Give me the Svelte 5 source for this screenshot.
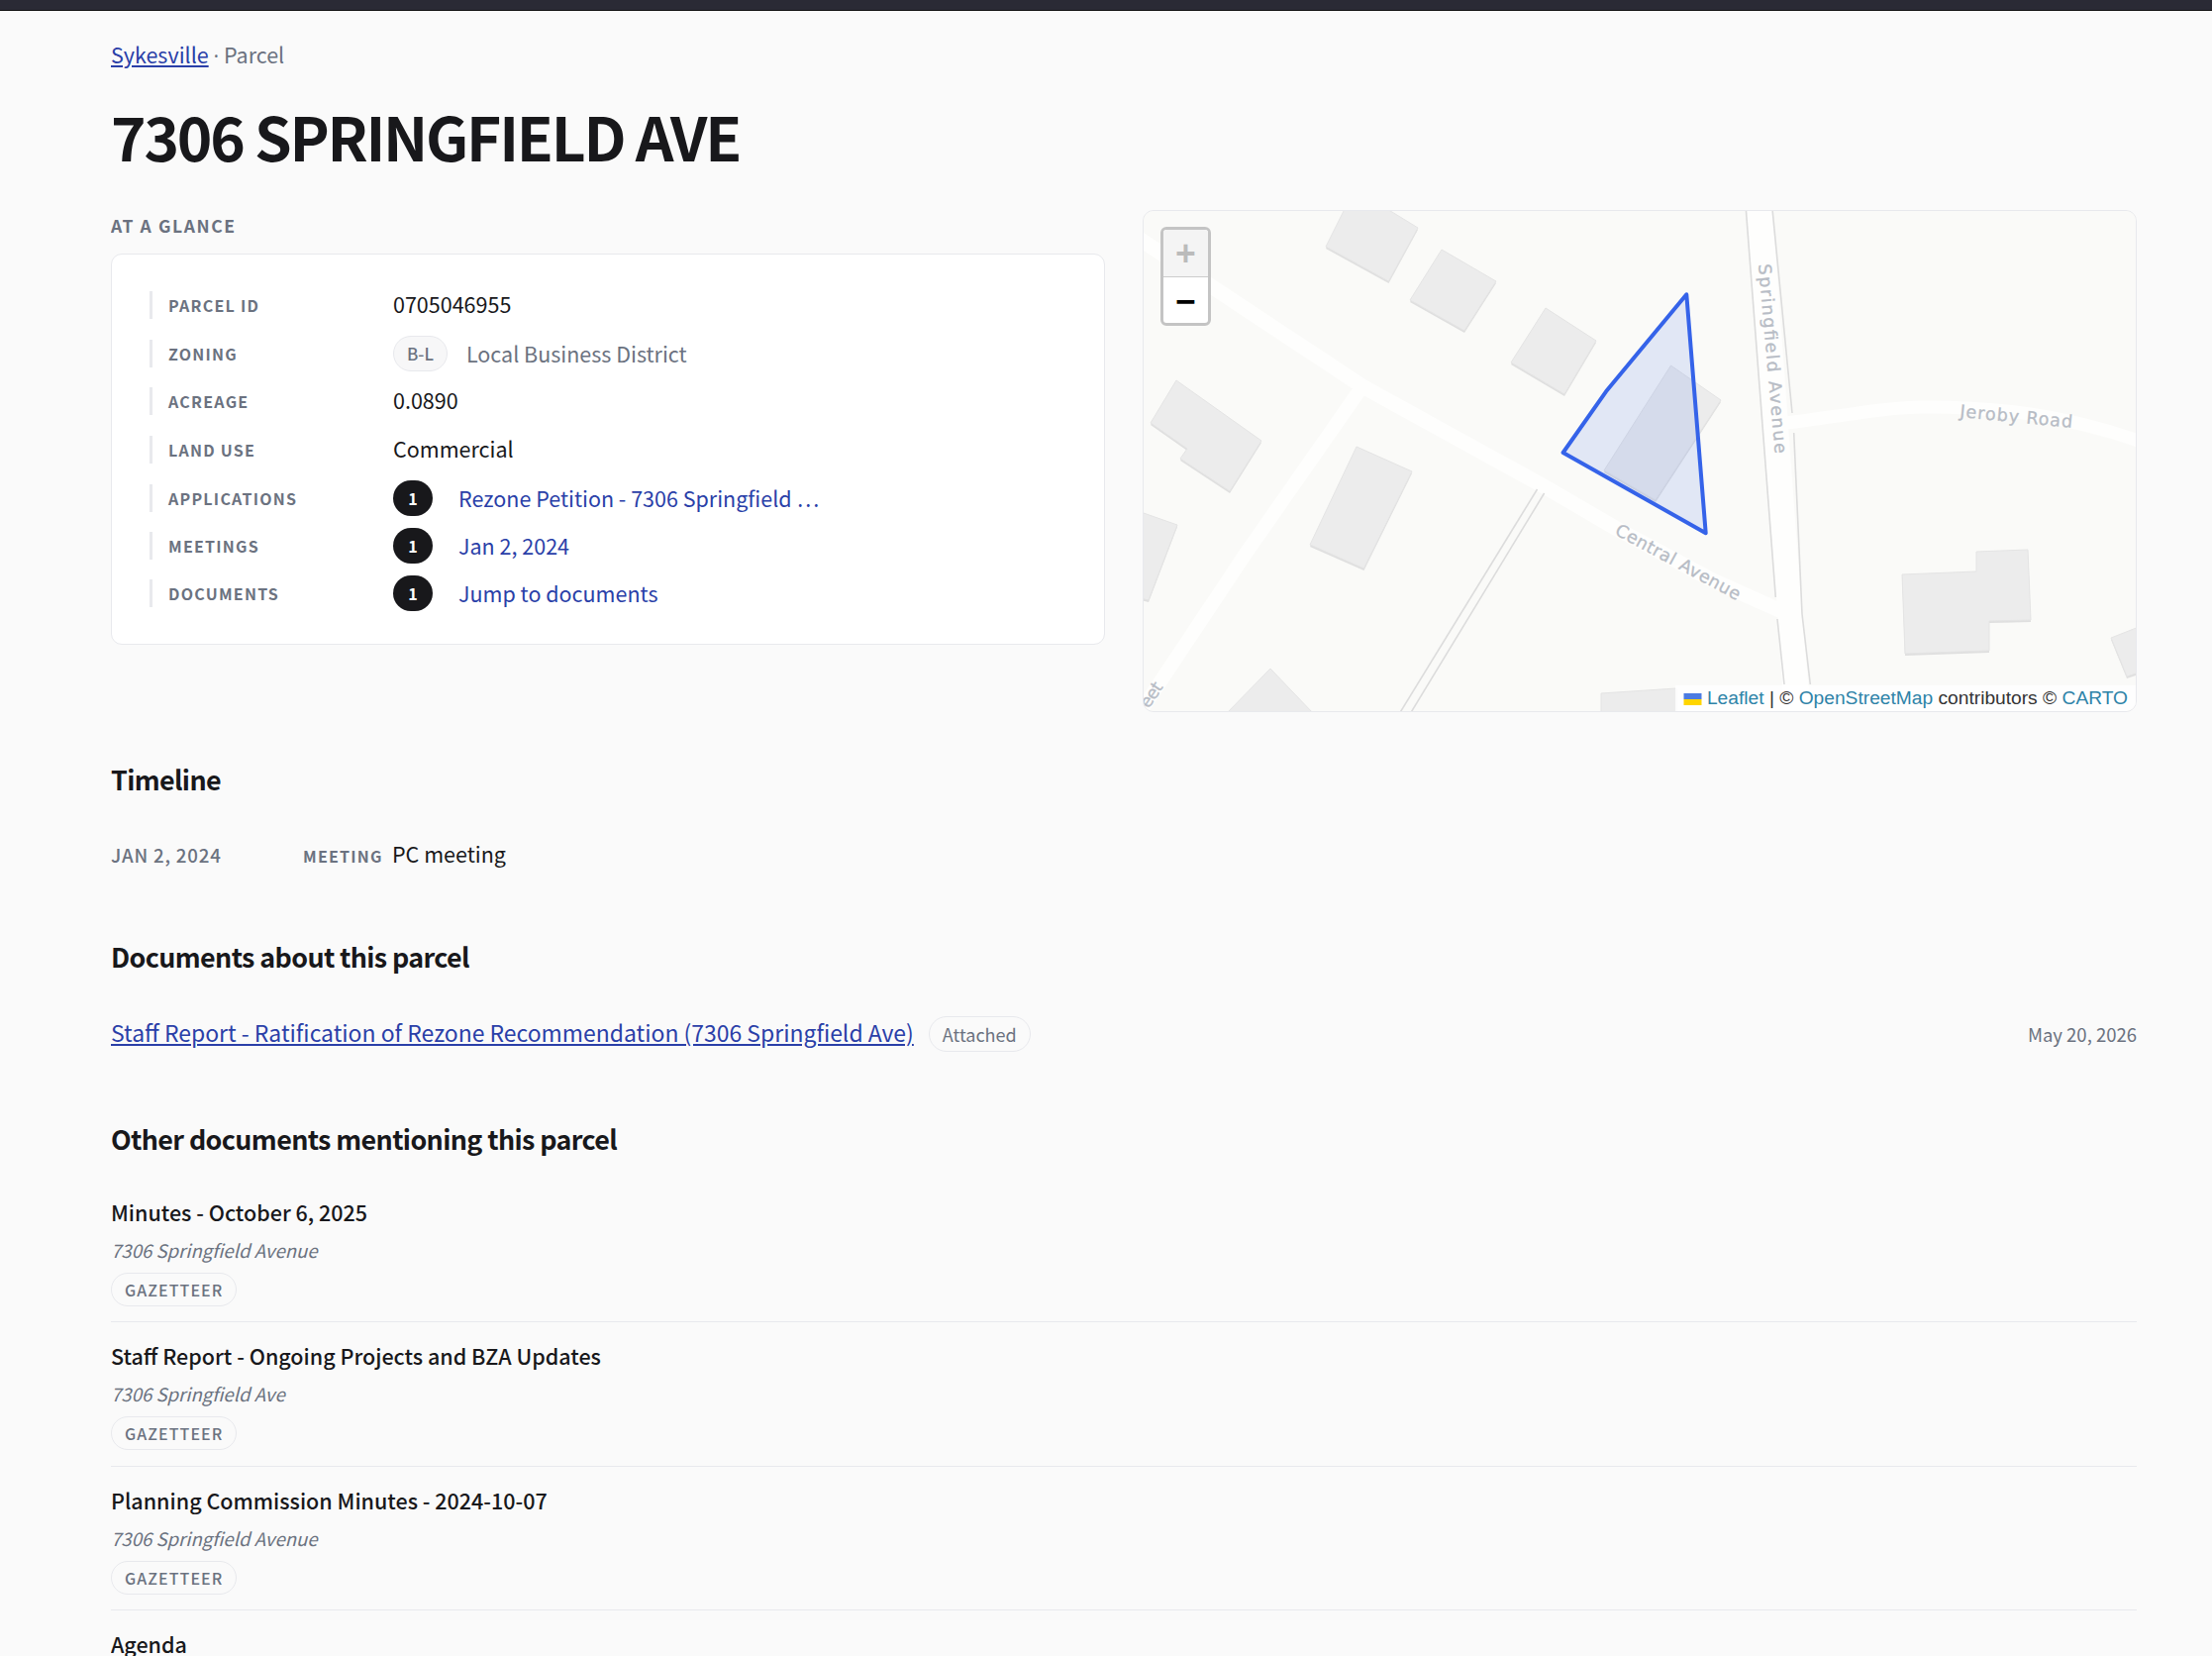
<script>
  const rows = [
    { label: 'Parcel ID', value: '0705046955' },
    { label: 'Zoning', code: 'B-L', muted: 'Local Business District' },
    { label: 'Acreage', value: '0.0890' },
    { label: 'Land use', value: 'Commercial' },
    { label: 'Applications', count: 1, link: 'Rezone Petition - 7306 Springfield …' },
    { label: 'Meetings', count: 1, link: 'Jan 2, 2024' },
    { label: 'Documents', count: 1, link: 'Jump to documents' }
  ];

  const mentions = [
    { title: 'Minutes - October 6, 2025', sub: '7306 Springfield Avenue' },
    { title: 'Staff Report - Ongoing Projects and BZA Updates', sub: '7306 Springfield Ave' },
    { title: 'Planning Commission Minutes - 2024-10-07', sub: '7306 Springfield Avenue' },
    { title: 'Agenda' }
  ];

  // building footprints, in map pixels
  const buildings = [
    '204,-2 247,-2 278,17 248.5,71 185,36',
    '302,39 357,71 325,121 270,90',
    '407,98 458,131 426,185 372,153',
    '34,171 120,232 88,283 38,250 45,240 8,214',
    '216,238 272,263 223.5,361 169,337',
    '-2,304 35,317 6,393 -2,391',
    '129,462 173,508 84,508',
    '463,487 539,482 539,508 463,508',
    '533.5,156 584,191 518,292 466,262',
    '767,367 842,364 842,344 894,342 897,413 855,414 855,444 770,447',
    '978,431 1006,420 1006,466 994,470'
  ];
</script>

<div class="topbar"></div>

<main>
  <p class="crumb"><a href="#top">Sykesville</a> <span class="dot">·</span> Parcel</p>
  <h1>7306 SPRINGFIELD AVE</h1>

  <div class="top">
    <section>
      <h2 class="eyebrow">At a glance</h2>
      <dl class="card">
        {#each rows as r}
          <div class="row">
            <dt>{r.label}</dt>
            <dd>
              {#if r.code}
                <span class="code">{r.code}</span><span class="muted">{r.muted}</span>
              {:else if r.link}
                <span class="count">{r.count}</span><a class="plain" href="#top">{r.link}</a>
              {:else}
                <span class="value">{r.value}</span>
              {/if}
            </dd>
          </div>
        {/each}
      </dl>
    </section>

    <div class="map">
      <svg viewBox="0 0 1004 506" width="1004" height="506">
        <rect width="1004" height="506" fill="#fafaf8" />

        <g fill="none" stroke="#fefefd" stroke-width="15">
          <path d="M-5 27 L222 177 L407 279 L479 321 L576 373 L645 404" />
          <path d="M222 177 L104 346 L-4 508" stroke-width="14" />
          <path d="M650 214 C700 208 750 198 790 198 C860 198 930 205 1008 233" stroke-width="13" />
        </g>
        <path d="M609 -2 L641 402 L648 508 L675 508 L666 407 L636 -2 Z" fill="#fefefd" />
        <g fill="none" stroke="#dcdcdc" stroke-width="1.6">
          <path d="M609.3 -2 L639.3 390" />
          <path d="M641 412 L648 478" />
          <path d="M636 -2 L656 204" />
          <path d="M657.7 224 L666 407 L674.3 478" />
          <path d="M398.5 281 L259 508" />
          <path d="M405.6 285 L270 508" />
        </g>

        {#each buildings as pts}
          <polygon points={pts} fill="#dfdfdf" transform="translate(0 2)" />
          <polygon points={pts} fill="#ececec" stroke="#e4e4e4" stroke-width="1" />
        {/each}

        <polygon points="549.3,84.3 468,182.3 424.6,244 568.7,325.2" fill="#3563e9" fill-opacity="0.12" stroke="#3563e9" stroke-width="4" stroke-linejoin="round" />

        <g class="maplabel">
          <text transform="translate(476 326) rotate(28.5)" textLength="141" lengthAdjust="spacing">Central Avenue</text>
          <text transform="translate(622 54) rotate(85)" textLength="192" lengthAdjust="spacing">Springfield Avenue</text>
          <text transform="translate(825 208) rotate(5.5)" textLength="114" lengthAdjust="spacing">Jeroby Road</text>
          <text transform="translate(6 503) rotate(-56)" textLength="27" lengthAdjust="spacing">eet</text>
        </g>
      </svg>

      <div class="zoom">
        <span class="disabled">+</span>
        <span>−</span>
      </div>

      <div class="attrib">
        <svg class="flag" viewBox="0 0 12 8" width="19" height="12"><rect width="12" height="4" fill="#4C7BE1" /><rect y="4" width="12" height="4" fill="#FFD500" /></svg>
        <a href="#top">Leaflet</a> <span class="pipe">|</span> © <a href="#top">OpenStreetMap</a> contributors © <a href="#top">CARTO</a>
      </div>
    </div>
  </div>

  <h2 class="heading timeline-h">Timeline</h2>
  <div class="timeline">
    <span class="date">JAN 2, 2024</span>
    <span class="kind">Meeting</span>
    <span>PC meeting</span>
  </div>

  <h2 class="heading docs-h">Documents about this parcel</h2>
  <div class="doc">
    <a href="#top">Staff Report - Ratification of Rezone Recommendation (7306 Springfield Ave)</a>
    <span class="attached">Attached</span>
    <span class="docdate">May 20, 2026</span>
  </div>

  <h2 class="heading other-h">Other documents mentioning this parcel</h2>
  <ul>
    {#each mentions as m}
      <li>
        <div class="title">{m.title}</div>
        {#if m.sub}
          <div class="sub">{m.sub}</div>
          <span class="tag">Gazetteer</span>
        {/if}
      </li>
    {/each}
  </ul>
</main>

<style>
  :global(body) {
    background: #fafafa;
    color: #18181b;
    font-family: "Noto Sans CJK SC", "Open Sans", sans-serif;
    font-size: 21.5px;
  }

  .topbar {
    height: 10px;
    background: #2a2a35;
    border-bottom: 1px solid #111;
  }

  main {
    width: 2046px;
    margin-left: 112px;
    height: 1661px;
    overflow: hidden;
  }

  a {
    color: #2a3fa8;
  }

  .plain {
    text-decoration: none;
  }

  .crumb {
    margin: 28px 0 0;
    line-height: 32px;
    color: #6b7280;
  }

  .dot {
    font-family: "Open Sans", sans-serif;
  }

  h1 {
    margin: 27px 0 0;
    font-size: 60.4px;
    line-height: 76px;
    font-weight: 700;
    letter-spacing: -2.25px;
  }

  .top {
    display: grid;
    grid-template-columns: 1004px 1004px;
    gap: 38px;
    margin-top: 36.6px;
    align-items: start;
  }

  .eyebrow {
    margin: 4px 0 0;
    font-size: 17.5px;
    line-height: 24px;
    font-weight: 700;
    color: #6b7280;
    text-transform: uppercase;
    letter-spacing: 1.6px;
  }

  .card {
    margin: 16px 0 0;
    box-sizing: border-box;
    height: 395.4px;
    padding: 33px 38px 0;
    background: #fff;
    border: 1.4px solid #e8e9ed;
    border-radius: 11px;
    display: flex;
    flex-direction: column;
    gap: 12px;
  }

  .row {
    display: flex;
    align-items: center;
    min-height: 35.5px;
  }

  dt {
    box-sizing: border-box;
    width: 246px;
    height: 28px;
    line-height: 28px;
    padding-left: 16px;
    border-left: 3px solid #e8e9ed;
    font-size: 16px;
    font-weight: 700;
    color: #6b7280;
    text-transform: uppercase;
    letter-spacing: 1.25px;
  }

  dd {
    margin: 0;
    display: flex;
    align-items: center;
    line-height: 34px;
  }

  .value {
    margin-bottom: 3px;
  }

  .code {
    box-sizing: border-box;
    height: 36px;
    line-height: 34px;
    padding: 0 13px;
    margin-right: 19px;
    border: 1.4px solid #e8e9ed;
    border-radius: 18px;
    background: #f7f7f8;
    font-size: 17px;
    font-weight: 500;
    color: #6b7280;
  }

  .muted {
    color: #6b7280;
  }

  .count {
    width: 40px;
    height: 36px;
    line-height: 36px;
    margin-right: 26px;
    border-radius: 20px;
    background: #18181b;
    color: #fff;
    font-size: 16px;
    font-weight: 700;
    text-align: center;
  }

  .map {
    position: relative;
    box-sizing: border-box;
    width: 1004px;
    height: 507px;
    border: 1.4px solid #e8e9ed;
    border-radius: 11px;
    overflow: hidden;
    background: #fafaf8;
  }

  .map > svg {
    display: block;
    position: absolute;
    top: 0;
    left: -1px;
  }

  .maplabel text {
    font-family: "DejaVu Sans", sans-serif;
    font-size: 17.5px;
    fill: #b7bcc5;
    stroke: #b7bcc5;
    stroke-width: 0.3px;
  }

  .zoom {
    position: absolute;
    top: 16px;
    left: 17px;
    width: 51px;
    height: 100px;
    box-sizing: border-box;
    border: 3px solid #c4c4c4;
    border-radius: 6px;
    background: #fff;
    overflow: hidden;
    font-family: "DejaVu Sans Mono", monospace;
    font-weight: 700;
    font-size: 33px;
    text-align: center;
  }

  .zoom span {
    display: block;
    height: 47px;
    line-height: 48px;
    color: #000;
  }

  .zoom .disabled {
    background: #f4f4f4;
    color: #bbb;
    border-bottom: 1px solid #ccc;
  }

  .attrib {
    position: absolute;
    right: 0;
    bottom: 0;
    height: 26px;
    line-height: 26px;
    padding: 0 8px;
    background: rgba(255, 255, 255, 0.8);
    font-family: "Liberation Sans", sans-serif;
    font-size: 19.2px;
    color: #333;
    white-space: nowrap;
  }

  .attrib a {
    color: #2e83a8;
    text-decoration: none;
  }

  .flag {
    vertical-align: -1px;
  }

  .heading {
    margin: 0;
    font-size: 26.9px;
    line-height: 40px;
    font-weight: 700;
    letter-spacing: -0.63px;
  }

  .timeline-h {
    margin-top: 48px;
  }

  .timeline {
    display: flex;
    align-items: baseline;
    margin-top: 38px;
    line-height: 34px;
  }

  .date {
    width: 194px;
    flex: none;
    font-size: 18.7px;
    color: #6b7280;
    letter-spacing: 0.8px;
    font-weight: 500;
  }

  .kind {
    width: 90px;
    flex: none;
    font-size: 16px;
    font-weight: 700;
    color: #6b7280;
    text-transform: uppercase;
    letter-spacing: 1.25px;
  }

  .docs-h {
    margin-top: 65px;
  }

  .doc {
    display: flex;
    align-items: center;
    margin-top: 40px;
    height: 36px;
  }

  .doc a {
    font-size: 22.95px;
    margin-bottom: 3px;
  }

  .attached {
    box-sizing: border-box;
    height: 36px;
    line-height: 34px;
    margin-left: 15px;
    padding: 0 13px;
    border: 1.4px solid #e8e9ed;
    border-radius: 18px;
    font-size: 18px;
    color: #6b7280;
  }

  .docdate {
    margin-left: auto;
    font-size: 18.5px;
    color: #6b7280;
  }

  .other-h {
    margin-top: 68px;
  }

  ul {
    list-style: none;
    margin: 20.5px 0 0;
    padding: 0;
  }

  li {
    box-sizing: border-box;
    height: 145.3px;
    padding-top: 18px;
    border-bottom: 1.4px solid #e8e9ed;
  }

  .title {
    font-weight: 500;
    line-height: 32px;
  }

  .sub {
    margin-top: 6px;
    font-style: italic;
    font-size: 18.6px;
    line-height: 32px;
    color: #6b7280;
  }

  .tag {
    display: inline-block;
    box-sizing: border-box;
    margin-top: 7px;
    height: 34px;
    line-height: 32px;
    padding: 0 13px;
    border: 1.4px solid #e8e9ed;
    border-radius: 17px;
    font-size: 16px;
    font-weight: 500;
    color: #6b7280;
    text-transform: uppercase;
    letter-spacing: 1.1px;
  }
</style>
